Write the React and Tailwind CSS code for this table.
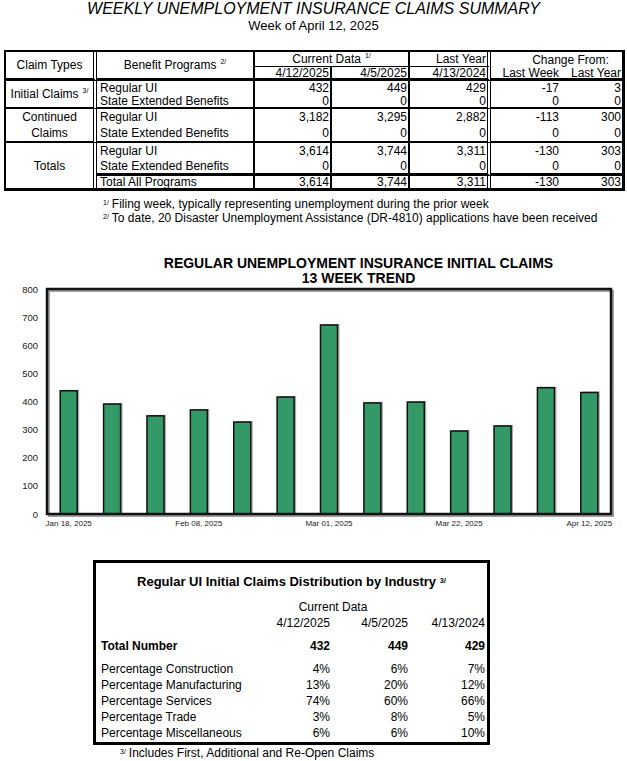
import React from 'react';

const groups = [
  {
    label: (
      <>
        Initial Claims<sup className="text-[7px] ml-[4px]">3/</sup>
      </>
    ),
    rows: [
      ['Regular UI', '432', '449', '429', '-17', '3'],
      ['State Extended Benefits', '0', '0', '0', '0', '0'],
    ],
  },
  {
    label: (
      <span className="leading-[16px]">
        Continued
        <br />
        Claims
      </span>
    ),
    rows: [
      ['Regular UI', '3,182', '3,295', '2,882', '-113', '300'],
      ['State Extended Benefits', '0', '0', '0', '0', '0'],
    ],
  },
  {
    label: 'Totals',
    rows: [
      ['Regular UI', '3,614', '3,744', '3,311', '-130', '303'],
      ['State Extended Benefits', '0', '0', '0', '0', '0'],
      ['Total All Programs', '3,614', '3,744', '3,311', '-130', '303'],
    ],
  },
];

const trend = [438, 391, 349, 370, 327, 416, 672, 395, 398, 295, 313, 449, 432];
const dateLabels = ['Jan 18, 2025', '', '', 'Feb 08, 2025', '', '', 'Mar 01, 2025', '', '', 'Mar 22, 2025', '', '', 'Apr 12, 2025'];

const industry = [
  ['Percentage Construction', '4%', '6%', '7%'],
  ['Percentage Manufacturing', '13%', '20%', '12%'],
  ['Percentage Services', '74%', '60%', '66%'],
  ['Percentage Trade', '3%', '8%', '5%'],
  ['Percentage Miscellaneous', '6%', '6%', '10%'],
];

const ClaimsTable = () => (
  <div className="ml-[4px] w-[621px] grid grid-cols-[91px_158px_77px_78px_81px_71px_60px] grid-rows-[15px_14px_14px_14px_16px_18px_15px_18px_12px] border-2 border-r-[3px] border-b-[3px] border-black text-[12px] leading-none">
    {/* header */}
    <div className="col-start-1 row-start-1 row-span-2 flex items-center justify-center border-r-4 [border-right-style:double] border-b-[3px] border-black">
      Claim Types
    </div>
    <div className="col-start-2 row-start-1 row-span-2 flex items-center justify-center border-r-2 border-b-[3px] border-black">
      Benefit Programs<sup className="text-[7px] ml-[4px]">2/</sup>
    </div>
    <div className="col-start-3 col-span-2 row-start-1 flex items-center justify-center border-r-2 border-b border-black">
      Current Data<sup className="text-[7px] ml-[4px]">1/</sup>
    </div>
    <div className="col-start-5 row-start-1 flex items-center justify-end pr-px border-r-4 [border-right-style:double] border-b border-black">
      Last Year
    </div>
    <div className="col-start-6 col-span-2 row-start-1 flex items-center justify-center pl-[28px]">
      Change From:
    </div>
    <div className="col-start-3 row-start-2 flex items-center justify-end pr-px border-r-2 border-b-[3px] border-black">
      4/12/2025
    </div>
    <div className="col-start-4 row-start-2 flex items-center justify-end pr-px border-r-2 border-b-[3px] border-black">
      4/5/2025
    </div>
    <div className="col-start-5 row-start-2 flex items-center justify-end pr-px border-r-4 [border-right-style:double] border-b-[3px] border-black">
      4/13/2024
    </div>
    <div className="col-start-6 row-start-2 flex items-center justify-end pr-[3px] border-b-[3px] border-black">
      Last Week
    </div>
    <div className="col-start-7 row-start-2 flex items-center justify-end pr-px border-b-[3px] border-black">
      Last Year
    </div>

    {/* body */}
    {groups.map((g, gi) => {
      const isTotals = g.rows.length === 3;
      return (
        <React.Fragment key={gi}>
          <div
            className={`${isTotals ? 'row-span-3' : 'row-span-2 border-b-2'} flex items-center justify-center text-center border-r-4 [border-right-style:double] border-black`}
          >
            {g.label}
          </div>
          {g.rows.map((r, ri) => {
            let edge = '';
            if (!isTotals && ri === 1) edge = 'border-b-2';
            if (isTotals && ri === 1) edge = 'border-b-[3px]';
            return (
              <React.Fragment key={ri}>
                <div className={`flex items-center pl-[3px] border-r-2 border-black ${edge}`}>{r[0]}</div>
                <div className={`flex items-center justify-end pr-px border-r-2 border-black ${edge}`}>{r[1]}</div>
                <div className={`flex items-center justify-end pr-px border-r-2 border-black ${edge}`}>{r[2]}</div>
                <div className={`flex items-center justify-end pr-px border-r-4 [border-right-style:double] border-black ${edge}`}>{r[3]}</div>
                <div className={`flex items-center justify-end pr-[3px] border-black ${edge}`}>{r[4]}</div>
                <div className={`flex items-center justify-end pr-px border-black ${edge}`}>{r[5]}</div>
              </React.Fragment>
            );
          })}
        </React.Fragment>
      );
    })}
  </div>
);

const TrendChart = () => {
  const L = 47;
  const R = 611;
  const T = 3;
  const B = 228;
  const slot = (R - L) / 13;
  const bw = 17;
  const yOf = (v) => B - (v / 800) * (B - T);
  return (
    <svg width="627" height="246" className="block overflow-visible">
      {[0, 100, 200, 300, 400, 500, 600, 700, 800].map((v) => (
        <text key={v} x="38" y={yOf(v) + 3.5} textAnchor="end" fontSize="9.5" fill="#222" fontFamily="Liberation Sans, Arial, sans-serif">
          {v}
        </text>
      ))}
      {/* frame shadow */}
      <rect x={L + 2} y={T + 2} width={R - L} height={B - T} fill="none" stroke="#a0a0a0" strokeWidth="2" />
      {trend.map((v, i) => {
        const x = L + i * slot + (slot - bw) / 2;
        const y = yOf(v);
        return (
          <g key={i}>
            <rect x={x + 2} y={y - 1} width={bw} height={B - y + 1} fill="#a8a8a8" />
            <rect x={x} y={y} width={bw} height={B - y} fill="#339966" stroke="#111" strokeWidth="1.5" />
          </g>
        );
      })}
      <rect x={L} y={T} width={R - L} height={B - T} fill="none" stroke="#111" strokeWidth="2.5" />
      {dateLabels.map((d, i) =>
        d ? (
          <text key={i} x={L + i * slot + slot / 2} y={B + 12} textAnchor="middle" fontSize="8" fill="#222" fontFamily="Liberation Sans, Arial, sans-serif">
            {d}
          </text>
        ) : null
      )}
    </svg>
  );
};

const App = () => {
  return (
    <div className="w-[627px] h-[761px] bg-white text-black font-['Liberation_Sans',Arial,sans-serif] overflow-hidden">
      {/* Heading */}
      <div className="text-center">
        <h1 className="text-[16px] leading-[18px] italic">WEEKLY UNEMPLOYMENT INSURANCE CLAIMS SUMMARY</h1>
        <p className="text-[13px] leading-[16px]">Week of April 12, 2025</p>
      </div>

      <div className="mt-4">
        <ClaimsTable />
      </div>

      {/* Footnotes */}
      <div className="mt-[6px] ml-[103px] text-[12px] leading-[14px]">
        <p>
          <sup className="text-[7px] mr-[3px]">1/</sup>Filing week, typically representing unemployment during the prior week
        </p>
        <p>
          <sup className="text-[7px] mr-[3px]">2/</sup>To date, 20 Disaster Unemployment Assistance (DR-4810) applications have been received
        </p>
      </div>

      {/* Chart */}
      <div className="mt-[31px] pl-[90px] text-center text-[14px] leading-[15px] font-bold">
        <p>REGULAR UNEMPLOYMENT INSURANCE INITIAL CLAIMS</p>
        <p>13 WEEK TREND</p>
      </div>
      <TrendChart />

      {/* Industry distribution */}
      <div className="mt-[28px] ml-[93px] w-[397px] border-[3px] border-black pt-[11px] pb-px text-[12px] leading-[16px]">
        <p className="text-center text-[13px] font-bold">
          Regular UI Initial Claims Distribution by Industry<sup className="text-[7px] ml-[4px]">3/</sup>
        </p>
        <div className="mt-[9px] pl-[5px] grid grid-cols-[149px_80px_78px_77px]">
          <div className="col-start-2 col-span-2 text-center pl-[8px]">Current Data</div>
          <div className="col-start-2 text-right">4/12/2025</div>
          <div className="text-right">4/5/2025</div>
          <div className="text-right">4/13/2024</div>
          <div className="mt-[7px] font-bold">Total Number</div>
          <div className="mt-[7px] font-bold text-right">432</div>
          <div className="mt-[7px] font-bold text-right">449</div>
          <div className="mt-[7px] font-bold text-right">429</div>
          <div className="col-span-4 h-[7px]" />
          {industry.map((r) => (
            <React.Fragment key={r[0]}>
              <div>{r[0]}</div>
              <div className="text-right">{r[1]}</div>
              <div className="text-right">{r[2]}</div>
              <div className="text-right">{r[3]}</div>
            </React.Fragment>
          ))}
        </div>
      </div>
      <p className="ml-[120px] text-[12px] leading-[16px]">
        <sup className="text-[7px] mr-[3px]">3/</sup>Includes First, Additional and Re-Open Claims
      </p>
    </div>
  );
};

export default App;
